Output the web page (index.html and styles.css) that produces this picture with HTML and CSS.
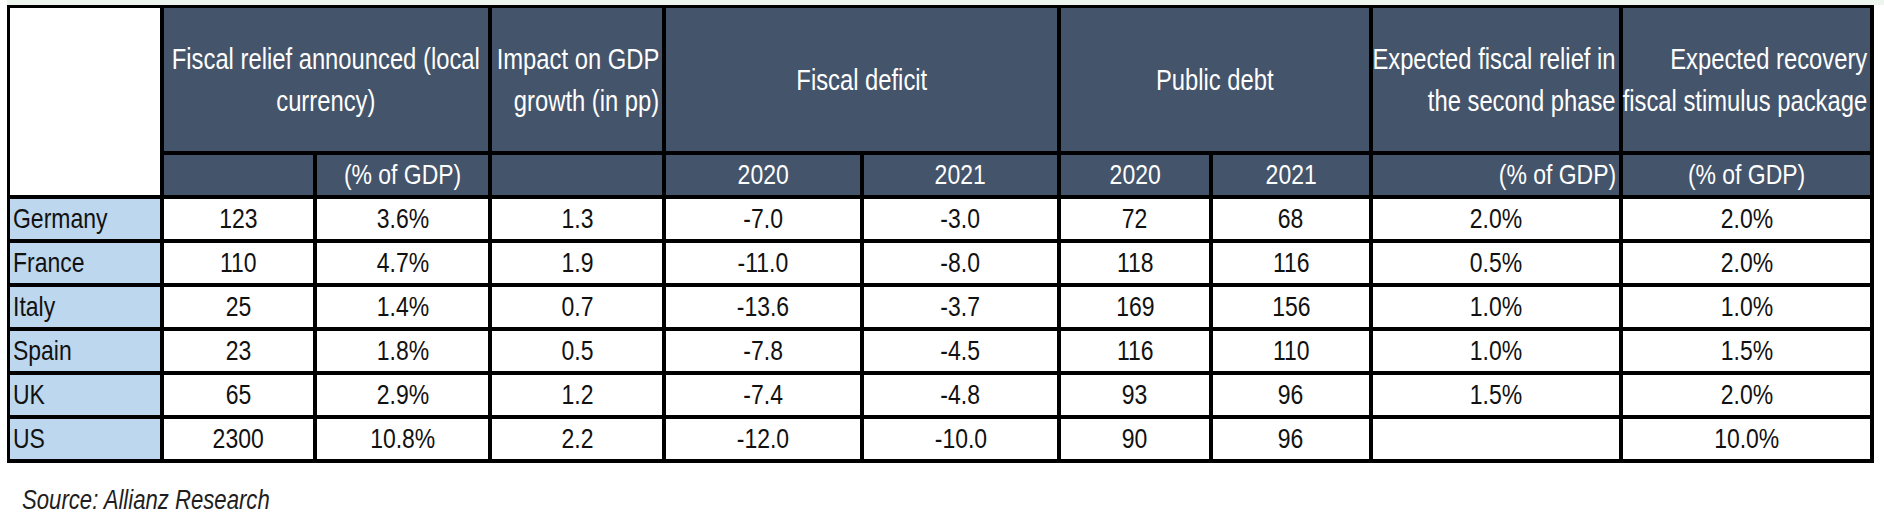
FILE: index.html
```html
<!DOCTYPE html>
<html lang="en">
<head>
<meta charset="utf-8">
<title>Fiscal relief table</title>
<link rel="stylesheet" href="styles.css">
</head>
<body>
<div class="strip"></div>
<div class="table">
  <div class="cell blank corner"></div>
  <div class="cell head span2 center"><span class="t">Fiscal relief announced (local<br>currency)</span></div>
  <div class="cell head right"><span class="t">Impact on GDP<br>growth (in pp)</span></div>
  <div class="cell head span2 center"><span class="t">Fiscal deficit</span></div>
  <div class="cell head span2 center"><span class="t">Public debt</span></div>
  <div class="cell head right"><span class="t">Expected fiscal relief in<br>the second phase</span></div>
  <div class="cell head right"><span class="t">Expected recovery<br>fiscal stimulus package</span></div>

  <div class="cell sub"></div>
  <div class="cell sub center"><span class="t">(% of GDP)</span></div>
  <div class="cell sub"></div>
  <div class="cell sub center"><span class="t">2020</span></div>
  <div class="cell sub center"><span class="t">2021</span></div>
  <div class="cell sub center"><span class="t">2020</span></div>
  <div class="cell sub center"><span class="t">2021</span></div>
  <div class="cell sub right"><span class="t">(% of GDP)</span></div>
  <div class="cell sub center"><span class="t">(% of GDP)</span></div>

  <div class="cell country"><span class="t">Germany</span></div>
  <div class="cell data"><span class="t">123</span></div><div class="cell data"><span class="t">3.6%</span></div><div class="cell data"><span class="t">1.3</span></div>
  <div class="cell data"><span class="t">-7.0</span></div><div class="cell data"><span class="t">-3.0</span></div><div class="cell data"><span class="t">72</span></div><div class="cell data"><span class="t">68</span></div>
  <div class="cell data"><span class="t">2.0%</span></div><div class="cell data"><span class="t">2.0%</span></div>

  <div class="cell country"><span class="t">France</span></div>
  <div class="cell data"><span class="t">110</span></div><div class="cell data"><span class="t">4.7%</span></div><div class="cell data"><span class="t">1.9</span></div>
  <div class="cell data"><span class="t">-11.0</span></div><div class="cell data"><span class="t">-8.0</span></div><div class="cell data"><span class="t">118</span></div><div class="cell data"><span class="t">116</span></div>
  <div class="cell data"><span class="t">0.5%</span></div><div class="cell data"><span class="t">2.0%</span></div>

  <div class="cell country"><span class="t">Italy</span></div>
  <div class="cell data"><span class="t">25</span></div><div class="cell data"><span class="t">1.4%</span></div><div class="cell data"><span class="t">0.7</span></div>
  <div class="cell data"><span class="t">-13.6</span></div><div class="cell data"><span class="t">-3.7</span></div><div class="cell data"><span class="t">169</span></div><div class="cell data"><span class="t">156</span></div>
  <div class="cell data"><span class="t">1.0%</span></div><div class="cell data"><span class="t">1.0%</span></div>

  <div class="cell country"><span class="t">Spain</span></div>
  <div class="cell data"><span class="t">23</span></div><div class="cell data"><span class="t">1.8%</span></div><div class="cell data"><span class="t">0.5</span></div>
  <div class="cell data"><span class="t">-7.8</span></div><div class="cell data"><span class="t">-4.5</span></div><div class="cell data"><span class="t">116</span></div><div class="cell data"><span class="t">110</span></div>
  <div class="cell data"><span class="t">1.0%</span></div><div class="cell data"><span class="t">1.5%</span></div>

  <div class="cell country"><span class="t">UK</span></div>
  <div class="cell data"><span class="t">65</span></div><div class="cell data"><span class="t">2.9%</span></div><div class="cell data"><span class="t">1.2</span></div>
  <div class="cell data"><span class="t">-7.4</span></div><div class="cell data"><span class="t">-4.8</span></div><div class="cell data"><span class="t">93</span></div><div class="cell data"><span class="t">96</span></div>
  <div class="cell data"><span class="t">1.5%</span></div><div class="cell data"><span class="t">2.0%</span></div>

  <div class="cell country"><span class="t">US</span></div>
  <div class="cell data"><span class="t">2300</span></div><div class="cell data"><span class="t">10.8%</span></div><div class="cell data"><span class="t">2.2</span></div>
  <div class="cell data"><span class="t">-12.0</span></div><div class="cell data"><span class="t">-10.0</span></div><div class="cell data"><span class="t">90</span></div><div class="cell data"><span class="t">96</span></div>
  <div class="cell data"></div><div class="cell data"><span class="t">10.0%</span></div>
</div>
<p class="source"><span class="t">Source: Allianz Research</span></p>
</body>
</html>
```
FILE: styles.css
```css
html, body {
  margin: 0;
  padding: 0;
  background: #ffffff;
}

body {
  font-family: "Liberation Sans", Arial, sans-serif;
  color: #111111;
}

.strip {
  height: 5px;
  margin-left: 7px;
  background: #eef4ee;
}

.table {
  display: grid;
  width: max-content;
  margin-left: 7px;
  padding: 3px 4px 4px 3px;
  gap: 4px;
  background: #000000;
  grid-template-columns: 150px 149px 171px 170px 194px 193px 148px 156px 246px 247px;
  grid-template-rows: 143px 40px repeat(6, 40px);
}

.cell {
  display: flex;
  align-items: center;
  white-space: nowrap;
  overflow: visible;
  min-width: 0;
}

/* condensed rendering of the narrow report typeface */
.t {
  display: inline-block;
  transform: scaleX(0.82);
  transform-origin: center center;
}

.corner {
  grid-row: span 2;
  background: #ffffff;
}

.span2 {
  grid-column: span 2;
}

.head {
  background: #44546a;
  color: #ffffff;
  font-size: 29px;
  line-height: 42px;
}

.sub {
  background: #44546a;
  color: #ffffff;
  font-size: 28px;
  line-height: 32px;
}

.center {
  justify-content: center;
  text-align: center;
}

.right {
  justify-content: flex-end;
  text-align: right;
  padding-right: 3px;
}

.right .t {
  transform-origin: right center;
}

.country {
  background: #bdd7ee;
  font-size: 28px;
  padding-left: 3px;
}

.country .t {
  transform-origin: left center;
}

.data {
  background: #ffffff;
  font-size: 28px;
  justify-content: center;
  text-align: center;
}

.source {
  margin: 21px 0 0 22px;
  font-size: 27px;
  line-height: 32px;
  font-style: italic;
  color: #1e1e1e;
}

.source .t {
  transform-origin: left center;
}
```
